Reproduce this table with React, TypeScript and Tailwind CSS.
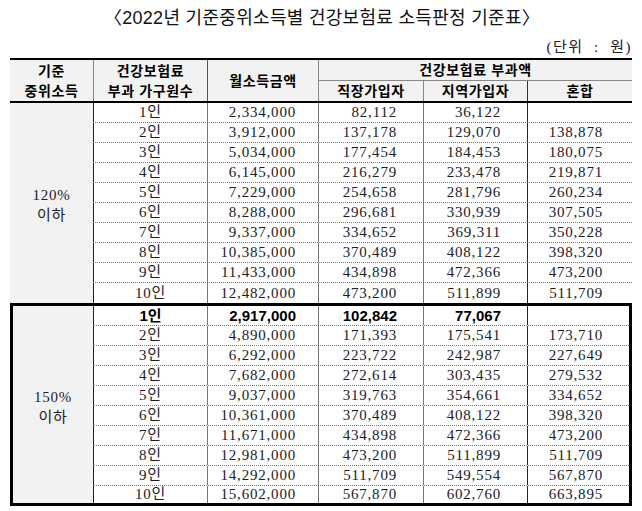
import React from "react";

const g1: string[][] = [
  ["1인", "2,334,000", "82,112", "36,122", ""],
  ["2인", "3,912,000", "137,178", "129,070", "138,878"],
  ["3인", "5,034,000", "177,454", "184,453", "180,075"],
  ["4인", "6,145,000", "216,279", "233,478", "219,871"],
  ["5인", "7,229,000", "254,658", "281,796", "260,234"],
  ["6인", "8,288,000", "296,681", "330,939", "307,505"],
  ["7인", "9,337,000", "334,652", "369,311", "350,228"],
  ["8인", "10,385,000", "370,489", "408,122", "398,320"],
  ["9인", "11,433,000", "434,898", "472,366", "473,200"],
  ["10인", "12,482,000", "473,200", "511,899", "511,709"],
];

const g2: string[][] = [
  ["1인", "2,917,000", "102,842", "77,067", ""],
  ["2인", "4,890,000", "171,393", "175,541", "173,710"],
  ["3인", "6,292,000", "223,722", "242,987", "227,649"],
  ["4인", "7,682,000", "272,614", "303,435", "279,532"],
  ["5인", "9,037,000", "319,763", "354,661", "334,652"],
  ["6인", "10,361,000", "370,489", "408,122", "398,320"],
  ["7인", "11,671,000", "434,898", "472,366", "473,200"],
  ["8인", "12,981,000", "473,200", "511,899", "511,709"],
  ["9인", "14,292,000", "511,709", "549,554", "567,870"],
  ["10인", "15,602,000", "567,870", "602,760", "663,895"],
];

const serif = "font-['Liberation_Serif','Noto_Sans_CJK_KR',serif]";
const sans = "font-['Liberation_Sans','Noto_Sans_CJK_KR',sans-serif]";

function Row({ r, last, boxed, h }: { r: string[]; last: boolean; boxed: boolean; h: string }) {
  const bold = boxed && r[0] === "1인";
  const txt = bold
    ? "font-['Liberation_Sans','Noto_Sans_CJK_KR',sans-serif] font-bold text-[15px] text-black"
    : `${serif} text-[15px] tracking-[0.8px] text-[#1c1c28]`;
  return (
    <div
      className={`grid ${boxed ? "grid-cols-[114px_111px_105px_104px_102px]" : "grid-cols-[114px_111px_105px_104px_105px]"} ${h} ${
        last ? "" : "border-b border-dotted border-[#7a7a7a]"
      } leading-none`}
    >
      <div className={`flex items-center justify-center border-l border-[#222] ${txt}`}>{r[0]}</div>
      <div className={`flex items-center justify-end pr-[22px] border-l border-[#777] ${txt}`}>{r[1]}</div>
      <div className={`flex items-center justify-end pr-[26px] border-l border-[#777] ${txt}`}>{r[2]}</div>
      <div className={`flex items-center justify-end pr-[26px] border-l border-[#777] ${txt}`}>{r[3]}</div>
      <div className={`flex items-center justify-end ${boxed ? "pr-[26px]" : "pr-[29px]"} border-l border-[#222] ${txt}`}>{r[4]}</div>
    </div>
  );
}

function Group({ rows, label, boxed }: { rows: string[][]; label: string; boxed: boolean }) {
  return (
    <div className={`flex ${boxed ? "border-[3px] border-black" : ""}`}>
      <div
        className={`${boxed ? "w-[80px]" : "w-[83px]"} bg-[#f2f2f2] flex flex-col items-center justify-center ${serif} text-[15px] leading-[20px] text-[#1c1c28] pt-[4px] tracking-[0.8px]`}
      >
        <span>{label}</span>
        <span>이하</span>
      </div>
      <div className="flex flex-col">
        {rows.map((r, i) => (
          <Row
            key={i}
            r={r}
            boxed={boxed}
            last={i === rows.length - 1}
            h={boxed && i === rows.length - 1 ? "h-[17px]" : "h-[20px]"}
          />
        ))}
      </div>
    </div>
  );
}

export default function App() {
  return (
    <div className="w-[642px] h-[511px] bg-white overflow-hidden relative">
      <div className={`h-[36px] flex items-center justify-center pl-[2px] ${sans} text-[18px] tracking-[0.3px] text-[#111]`}>
        〈2022년 기준중위소득별 건강보험료 소득판정 기준표〉
      </div>
      <div className={`h-[22px] flex items-center justify-end pr-[10px] ${serif} text-[15px] tracking-[1.5px] text-[#222]`}>
        (단위&nbsp;&nbsp;:&nbsp;&nbsp;원)
      </div>
      <div className="ml-[10px] w-[622px]">
        <div className={`border-t-2 border-b-2 border-black bg-[#f2f2f2] grid grid-cols-[83px_114px_111px_105px_104px_105px] grid-rows-[21px_20px] ${sans} font-bold text-[14px] tracking-[0.6px] text-black leading-[20px]`}>
          <div className="row-span-2 flex flex-col items-center justify-center">
            <span>기준</span>
            <span>중위소득</span>
          </div>
          <div className="row-span-2 flex flex-col items-center justify-center border-l border-[#888]">
            <span>건강보험료</span>
            <span>부과 가구원수</span>
          </div>
          <div className="row-span-2 flex items-center justify-center border-l border-[#555]">월소득금액</div>
          <div className="col-span-3 flex items-center justify-center border-l border-[#888] border-b border-b-[#888]">
            건강보험료 부과액
          </div>
          <div className="flex items-center justify-center border-l border-[#888]">직장가입자</div>
          <div className="flex items-center justify-center border-l border-[#888]">지역가입자</div>
          <div className="flex items-center justify-center border-l border-[#333]">혼합</div>
        </div>
        <Group rows={g1} label="120%" boxed={false} />
        <Group rows={g2} label="150%" boxed={true} />
      </div>
    </div>
  );
}
